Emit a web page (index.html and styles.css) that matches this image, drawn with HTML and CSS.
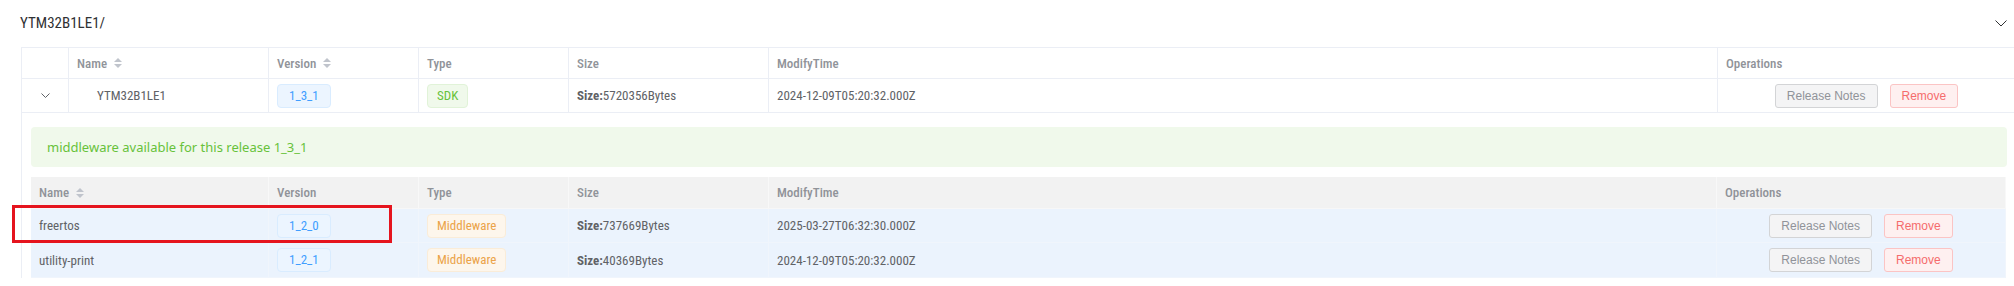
FILE: index.html
```html
<!DOCTYPE html>
<html>
<head>
<meta charset="utf-8">
<link rel="stylesheet" href="styles.css">
</head>
<body>
<div class="page">
  <div class="panel-head">
    <span class="panel-title">YTM32B1LE1/</span>
    <svg class="panel-arrow" width="12" height="7" viewBox="0 0 12 7"><polyline points="0.5,0.5 6,6 11.5,0.5" fill="none" stroke="#303133" stroke-width="1"/></svg>
  </div>

  <div class="outer">
    <div class="row outer-cols head">
      <div class="cell"></div>
      <div class="cell"><span>Name</span><svg class="caret" width="10" height="12" viewBox="0 0 10 12"><polygon points="1,5 5,1 9,5" fill="#c0c4cc"/><polygon points="1,7 5,11 9,7" fill="#c0c4cc"/></svg></div>
      <div class="cell"><span>Version</span><svg class="caret" width="10" height="12" viewBox="0 0 10 12"><polygon points="1,5 5,1 9,5" fill="#c0c4cc"/><polygon points="1,7 5,11 9,7" fill="#c0c4cc"/></svg></div>
      <div class="cell"><span>Type</span></div>
      <div class="cell"><span>Size</span></div>
      <div class="cell"><span>ModifyTime</span></div>
      <div class="cell"><span>Operations</span></div>
    </div>
    <div class="row outer-cols body-row">
      <div class="cell cell-center"><svg class="expand" width="9" height="5" viewBox="0 0 9 5"><polyline points="0.5,0.5 4.5,4.5 8.5,0.5" fill="none" stroke="#606266" stroke-width="1"/></svg></div>
      <div class="cell"><span class="indent">YTM32B1LE1</span></div>
      <div class="cell"><span class="tag tag-blue">1_3_1</span></div>
      <div class="cell"><span class="tag tag-green">SDK</span></div>
      <div class="cell"><b class="lbl">Size:</b>5720356Bytes</div>
      <div class="cell">2024-12-09T05:20:32.000Z</div>
      <div class="cell cell-ops"><button class="btn btn-info">Release Notes</button><button class="btn btn-danger">Remove</button></div>
    </div>

    <div class="expanded">
      <div class="alert">middleware available for this release 1_3_1</div>
      <div class="inner">
        <div class="row inner-cols ihead">
          <div class="cell"><span>Name</span><svg class="caret" width="10" height="12" viewBox="0 0 10 12"><polygon points="1,5 5,1 9,5" fill="#c0c4cc"/><polygon points="1,7 5,11 9,7" fill="#c0c4cc"/></svg></div>
          <div class="cell"><span>Version</span></div>
          <div class="cell"><span>Type</span></div>
          <div class="cell"><span>Size</span></div>
          <div class="cell"><span>ModifyTime</span></div>
          <div class="cell"><span>Operations</span></div>
        </div>
        <div class="row inner-cols irow">
          <div class="cell">freertos</div>
          <div class="cell"><span class="tag tag-blue">1_2_0</span></div>
          <div class="cell"><span class="tag tag-orange">Middleware</span></div>
          <div class="cell"><b class="lbl">Size:</b>737669Bytes</div>
          <div class="cell">2025-03-27T06:32:30.000Z</div>
          <div class="cell cell-ops"><button class="btn btn-info">Release Notes</button><button class="btn btn-danger">Remove</button></div>
        </div>
        <div class="row inner-cols irow irow-last">
          <div class="cell">utility-print</div>
          <div class="cell"><span class="tag tag-blue">1_2_1</span></div>
          <div class="cell"><span class="tag tag-orange">Middleware</span></div>
          <div class="cell"><b class="lbl">Size:</b>40369Bytes</div>
          <div class="cell">2024-12-09T05:20:32.000Z</div>
          <div class="cell cell-ops"><button class="btn btn-info">Release Notes</button><button class="btn btn-danger">Remove</button></div>
        </div>
      </div>
    </div>
  </div>

  <div class="mark"></div>
</div>
</body>
</html>
```
FILE: styles.css
```css
html, body {
  margin: 0;
  padding: 0;
  overflow: hidden;
  background: #ffffff;
}
body {
  width: 2014px;
  height: 286px;
  font-family: "Roboto Condensed", "Roboto", "Liberation Sans", sans-serif;
  font-size: 13px;
  color: #606266;
}
.page {
  position: relative;
  width: 2014px;
  height: 286px;
}
.panel-head {
  height: 47px;
  display: flex;
  align-items: center;
  justify-content: space-between;
  padding: 0 7px 1px 20px;
  box-sizing: border-box;
}
.panel-title {
  font-size: 15px;
  color: #303133;
}
.panel-arrow {
  display: block;
}
.outer {
  margin-left: 21px;
  width: 1996px;
  border-left: 1px solid #ebeef5;
  border-top: 1px solid #ebeef5;
  box-sizing: border-box;
}
.row {
  display: grid;
  box-sizing: border-box;
}
.outer-cols {
  grid-template-columns: 47px 200px 150px 150px 200px 949px 298px;
}
.inner-cols {
  grid-template-columns: 238px 150px 150px 200px 948px 289px;
}
.cell {
  display: flex;
  align-items: center;
  padding: 0 8px;
  border-right: 1px solid #ebeef5;
  box-sizing: border-box;
  white-space: nowrap;
  overflow: hidden;
}
.head {
  height: 31px;
  border-bottom: 1px solid #ebeef5;
}
.head .cell, .ihead .cell {
  color: #909399;
  font-weight: 500;
}
.caret {
  display: block;
  margin-left: 6px;
}
.body-row {
  height: 34px;
  border-bottom: 1px solid #ebeef5;
}
.cell-center {
  justify-content: center;
  padding: 0;
}
.expand {
  display: block;
}
.indent {
  padding-left: 20px;
}
.tag {
  display: inline-block;
  height: 24px;
  line-height: 22px;
  padding: 0 9px;
  border: 1px solid;
  border-radius: 4px;
  box-sizing: border-box;
  font-size: 13px;
}
.tag-blue {
  background: #ecf5ff;
  border-color: #d9ecff;
  color: #409eff;
  padding: 0 11px;
}
.tag-green {
  background: #f0f9eb;
  border-color: #e1f3d8;
  color: #67c23a;
}
.tag-orange {
  background: #fdf6ec;
  border-color: #faecd8;
  color: #eba349;
}
.lbl {
  font-weight: 700;
  color: #606266;
}
.cell-ops {
  justify-content: center;
  gap: 12px;
}
.btn {
  height: 24px;
  padding: 0 11px;
  border: 1px solid;
  border-radius: 3px;
  font-family: "Liberation Sans", Arial, sans-serif;
  font-size: 12px;
  line-height: 22px;
  box-sizing: border-box;
  margin: 0;
}
.btn-info {
  background: #f4f4f5;
  border-color: #d3d4d6;
  color: #909399;
}
.btn-danger {
  background: #fef0f0;
  border-color: #fbc4c4;
  color: #f56c6c;
}
.expanded {
  padding: 14px 10px 0 9px;
}
.alert {
  height: 40px;
  box-sizing: border-box;
  display: flex;
  align-items: center;
  padding: 0 16px;
  background: #f0f9eb;
  border-radius: 4px;
  color: #67c23a;
  font-family: "Noto Sans", "Liberation Sans", sans-serif;
  font-size: 13px;
  margin-bottom: 10px;
}
.inner {
  width: 1975px;
}
.ihead {
  height: 32px;
  background: #f2f2f2;
  border-bottom: 1px solid #f7f7f7;
}
.ihead .cell {
  border-right-color: #f8f8f8;
}
.irow {
  height: 34px;
  background: #ebf3fd;
  border-bottom: 1px solid #f0f5fc;
}
.irow-last {
  height: 35px;
}
.irow .cell {
  border-right-color: #f0f5fc;
}
.mark {
  position: absolute;
  left: 12px;
  top: 205px;
  width: 380px;
  height: 38px;
  border: 3px solid #e5141e;
  box-sizing: border-box;
}
```
